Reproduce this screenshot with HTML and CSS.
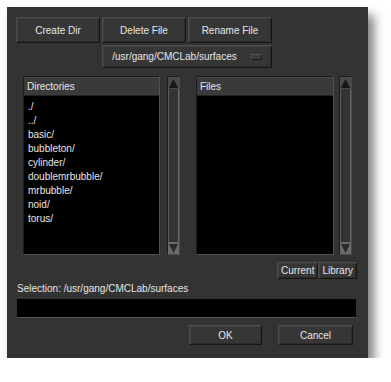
FILE: index.html
```html
<!DOCTYPE html>
<html lang="en">
<head>
    <meta charset="UTF-8">
    <title>File Chooser</title>
    <link rel="stylesheet" href="styles.css">
</head>
<body>
    <div class="dialog">
        <div class="top-buttons">
            <button class="btn">Create Dir</button>
            <button class="btn">Delete File</button>
            <button class="btn">Rename File</button>
        </div>
        <div class="path-row">
            <button class="btn path-btn">/usr/gang/CMCLab/surfaces <span class="indicator"></span></button>
        </div>

        <div class="lists">
            <div class="list dir-list">
                <div class="list-header">Directories</div>
                <ul class="list-body">
                    <li>./</li>
                    <li>../</li>
                    <li>basic/</li>
                    <li>bubbleton/</li>
                    <li>cylinder/</li>
                    <li>doublemrbubble/</li>
                    <li>mrbubble/</li>
                    <li>noid/</li>
                    <li>torus/</li>
                </ul>
            </div>
            <div class="scrollbar">
                <div class="arrow up">
                    <svg width="11" height="11" viewBox="0 0 11 11"><polygon points="5.5,1 10,10 1,10" fill="#151515"/></svg>
                </div>
                <div class="trough"></div>
                <div class="arrow down">
                    <svg width="11" height="11" viewBox="0 0 11 11"><polygon points="1,1 10,1 5.5,10" fill="#2a2a2a"/></svg>
                </div>
            </div>
            <div class="list file-list">
                <div class="list-header">Files</div>
                <ul class="list-body"></ul>
            </div>
            <div class="scrollbar">
                <div class="arrow up">
                    <svg width="11" height="11" viewBox="0 0 11 11"><polygon points="5.5,1 10,10 1,10" fill="#151515"/></svg>
                </div>
                <div class="trough"></div>
                <div class="arrow down">
                    <svg width="11" height="11" viewBox="0 0 11 11"><polygon points="1,1 10,1 5.5,10" fill="#2a2a2a"/></svg>
                </div>
            </div>
        </div>

        <div class="place-row">
            <button class="btn small">Current</button>
            <button class="btn small">Library</button>
        </div>

        <div class="selection-label">Selection: /usr/gang/CMCLab/surfaces</div>
        <div class="selection-input"></div>

        <div class="bottom-buttons">
            <button class="btn wide">OK</button>
            <button class="btn wide">Cancel</button>
        </div>
    </div>
</body>
</html>
```

FILE: styles.css
```css
* {
    margin: 0;
    padding: 0;
    box-sizing: border-box;
    font-family: 'Liberation Sans', Arial, sans-serif;
}

body {
    background: #ffffff;
}

.dialog {
    margin: 7px 0 0 7px;
    width: 361px;
    height: 351px;
    background: #333333;
    box-shadow: 6px 8px 10px rgba(0, 0, 0, 0.5);
    color: #e6e6e6;
    font-size: 10px;
    padding-top: 10px;
}

.btn {
    background: #363636;
    color: #e6e6e6;
    font-size: 10px;
    border: 1px solid;
    border-color: #4c4c4c #161616 #161616 #4c4c4c;
    box-shadow: inset 1px 1px 0 #3f3f3f, inset -1px -1px 0 #2a2a2a;
    display: flex;
    align-items: center;
    justify-content: center;
}

.top-buttons {
    display: flex;
    gap: 2px;
    margin-left: 9px;
}

.top-buttons .btn {
    width: 84px;
    height: 26px;
}

.path-row {
    margin: 2px 0 0 95px;
}

.path-btn {
    width: 170px;
    height: 23px;
    gap: 14px;
}

.indicator {
    display: inline-block;
    width: 11px;
    height: 6px;
    background: #3a3a3a;
    border: 1px solid;
    border-color: #555555 #1a1a1a #1a1a1a #555555;
}

.lists {
    display: flex;
    margin: 8px 0 0 16px;
    height: 179px;
}

.list {
    display: flex;
    flex-direction: column;
    background: #000000;
    border: 1px solid;
    border-color: #1c1c1c #505050 #505050 #1c1c1c;
}

.dir-list {
    width: 137px;
}

.file-list {
    width: 138px;
    margin-left: 16px;
}

.list-header {
    height: 19px;
    background: #3a3a3a;
    border-bottom: 1px solid #222222;
    border-top: 1px solid #4a4a4a;
    padding-left: 3px;
    line-height: 17px;
}

.list-body {
    list-style: none;
    padding: 4px 0 0 4px;
    flex: 1;
}

.list-body li {
    line-height: 14px;
    height: 14px;
}

.scrollbar {
    width: 13px;
    margin-left: 7px;
    display: flex;
    flex-direction: column;
    border: 1px solid;
    border-color: #1c1c1c #4a4a4a #4a4a4a #1c1c1c;
}

.file-list + .scrollbar {
    margin-left: 5px;
}

.arrow {
    height: 12px;
    display: flex;
    align-items: center;
    justify-content: center;
}

.arrow.up {
    background: #4a4a4a;
}

.arrow.down {
    background: #6a6a6a;
}

.trough {
    flex: 1;
    background: #333333;
    border-left: 1px solid #5c5c5c;
    border-right: 1px solid #6a6a6a;
}

.place-row {
    display: flex;
    justify-content: flex-end;
    margin: 7px 11px 0 0;
}

.btn.small {
    height: 17px;
    padding: 0 3px;
}

.selection-label {
    margin: 3px 0 0 10px;
    height: 14px;
    line-height: 14px;
}

.selection-input {
    margin: 3px 0 0 10px;
    width: 339px;
    height: 19px;
    background: #000000;
    border-bottom: 1px solid #555555;
}

.bottom-buttons {
    display: flex;
    gap: 16px;
    margin: 7px 0 0 182px;
}

.btn.wide {
    height: 20px;
}

.bottom-buttons .btn:first-child {
    width: 73px;
}

.bottom-buttons .btn:last-child {
    width: 75px;
}
```
